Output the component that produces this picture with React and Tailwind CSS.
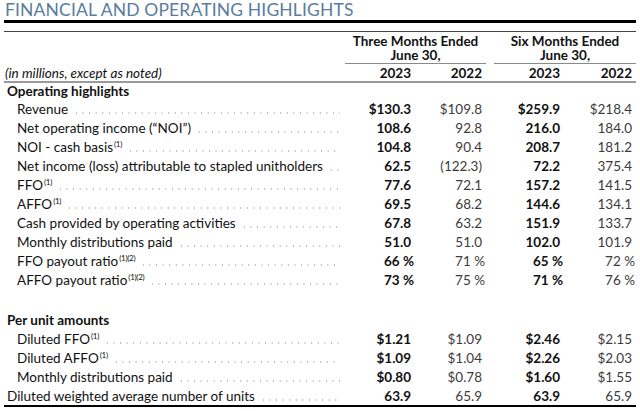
import React from "react";

const Sup = ({ children }) => (
  <sup className="text-[8px] !top-[-5px] ml-[1px] tracking-[-0.3px]">{children}</sup>
);

const rows = [
  { label: "Revenue", v: ["$130.3", "$109.8", "$259.9", "$218.4"] },
  { label: "Net operating income (“NOI”)", v: ["108.6", "92.8", "216.0", "184.0"] },
  { label: "NOI - cash basis", sup: "(1)", v: ["104.8", "90.4", "208.7", "181.2"] },
  { label: "Net income (loss) attributable to stapled unitholders", v: ["62.5", "(122.3)", "72.2", "375.4"] },
  { label: "FFO", sup: "(1)", v: ["77.6", "72.1", "157.2", "141.5"] },
  { label: "AFFO", sup: "(1)", v: ["69.5", "68.2", "144.6", "134.1"] },
  { label: "Cash provided by operating activities", v: ["67.8", "63.2", "151.9", "133.7"] },
  { label: "Monthly distributions paid", v: ["51.0", "51.0", "102.0", "101.9"] },
  { label: "FFO payout ratio", sup: "(1)(2)", pct: true, v: ["66 %", "71 %", "65 %", "72 %"] },
  { label: "AFFO payout ratio", sup: "(1)(2)", pct: true, v: ["73 %", "75 %", "71 %", "76 %"] },
];

const rows2 = [
  { label: "Diluted FFO", sup: "(1)", v: ["$1.21", "$1.09", "$2.46", "$2.15"] },
  { label: "Diluted AFFO", sup: "(1)", v: ["$1.09", "$1.04", "$2.26", "$2.03"] },
  { label: "Monthly distributions paid", v: ["$0.80", "$0.78", "$1.60", "$1.55"] },
];

const cols = "grid grid-cols-[337px_70px_71px_78px_72px]";

function Row({ r, indent = true }) {
  return (
    <div className={`${cols} h-[19px] items-center`}>
      <div className={`flex items-center ${indent ? "pl-[13px]" : "pl-[3px]"} pr-[1px] overflow-hidden h-[19px]`}>
        <span className="whitespace-nowrap shrink-0">
          {r.label}
          {r.sup && <Sup>{r.sup}</Sup>}
        </span>
        <span className="flex-1 ml-[5px] h-[2px] mt-[9px] bg-[radial-gradient(circle,#b8b8b8_0.6px,transparent_0.9px)] bg-[length:6.6px_2px] bg-repeat-x"></span>
      </div>
      {r.v.map((x, i) => (
        <div
          key={i}
          className={`text-right whitespace-nowrap ${r.pct ? "-mr-[3px]" : ""} ${i % 2 === 0 ? "font-bold text-[#111]" : "font-normal text-[#3c3c3c]"}`}
        >
          {x}
        </div>
      ))}
    </div>
  );
}

export default function App() {
  return (
    <div className="w-[640px] h-[411px] bg-white overflow-hidden font-['Lato',sans-serif] text-[13.5px] text-[#111] leading-[16px]">
      <div className="pl-[5px] h-[19px] text-[17.5px] text-[#5a7c9d] tracking-[0.15px] leading-[19px]">
        FINANCIAL AND OPERATING HIGHLIGHTS
      </div>
      <div className="mx-[4px]">
        <div className="h-[3px] bg-black mt-[1px]"></div>
        <div className="h-[1px] bg-[#444] mt-[8px]"></div>
        {/* header */}
        <div className={`${cols} pt-[2px]`}>
          <div></div>
          <div className="col-span-2 flex flex-col items-center font-bold ml-[4px] mr-[-4px]">
            <div className="leading-[14px]">Three Months Ended</div>
            <div className="leading-[14px]">June 30,</div>
            <div className="self-stretch h-[1px] bg-[#8a8a8a] mt-[1px]"></div>
          </div>
          <div className="col-span-2 flex flex-col items-center font-bold ml-[12px] mr-[-4px]">
            <div className="leading-[14px]">Six Months Ended</div>
            <div className="leading-[14px]">June 30,</div>
            <div className="self-stretch h-[1px] bg-[#8a8a8a] mt-[1px]"></div>
          </div>
        </div>
        <div className={`${cols} h-[17px] items-center`}>
          <div className="italic pl-[1px] font-normal whitespace-nowrap">(in millions, except as noted)</div>
          <div className="text-right font-bold">2023</div>
          <div className="text-right font-bold">2022</div>
          <div className="text-right font-bold">2023</div>
          <div className="text-right font-bold">2022</div>
        </div>
        <div className="h-[2px] bg-[#9a9a9a]"></div>
        <div className="h-[16px] flex items-center pl-[3px] font-bold">Operating highlights</div>
        {rows.map((r, i) => (
          <Row key={i} r={r} />
        ))}
        <div className="h-[21px]"></div>
        <div className="h-[19px] flex items-center pl-[3px] font-bold">Per unit amounts</div>
        {rows2.map((r, i) => (
          <Row key={i} r={r} />
        ))}
        <Row r={{ label: "Diluted weighted average number of units", v: ["63.9", "65.9", "63.9", "65.9"] }} indent={false} />
        <div className="h-[2px] bg-black"></div>
      </div>
    </div>
  );
}
